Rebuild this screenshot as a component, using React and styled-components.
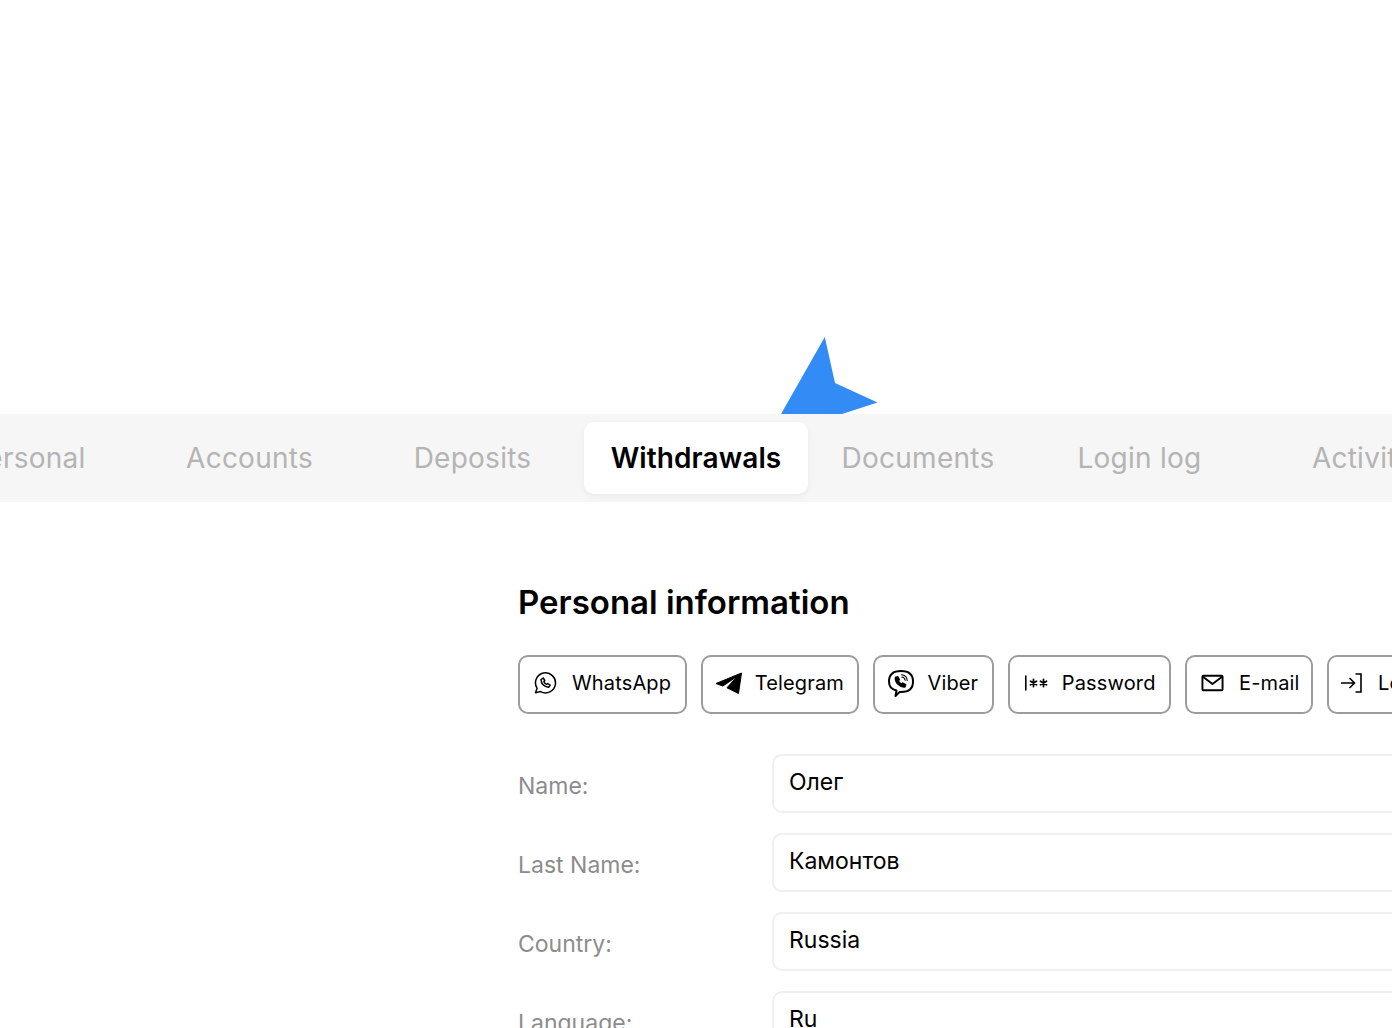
import React from "react";
import styled, { createGlobalStyle } from "styled-components";

const Global = createGlobalStyle`
  html, body { margin: 0; padding: 0; background: #fff; overflow: hidden; }
  body { font-family: Inter, "Liberation Sans", sans-serif; }
  * { box-sizing: border-box; }
`;
const Page = styled.div`
  width: 1392px; height: 1028px; overflow: hidden; position: relative; background: #fff;
`;
const Hero = styled.div`height: 414px; position: relative;`;
const Mark = styled.svg`position: absolute; left: 770px; top: 330px; display: block;`;
const TabBar = styled.nav`
  height: 88px; background: #f6f6f6; display: flex; align-items: center; margin-right: -200px; overflow: hidden;
`;
const TabRow = styled.div`display: flex; margin-left: -84px;`;
const Tab = styled.div`
  flex: none; width: ${p => p.$w}px; height: 72px; display: flex; align-items: center; justify-content: center;
  font-size: 28px; white-space: nowrap;
  letter-spacing: ${p => (p.$active ? "0.1px" : "0.25px")};
  font-weight: ${p => (p.$active ? 600 : 400)};
  color: ${p => (p.$active ? "#000" : "#b4b4b4")};
  background: ${p => (p.$active ? "#fff" : "transparent")};
  border-radius: ${p => (p.$active ? "10px" : "0")};
  box-shadow: ${p => (p.$active ? "0 2px 6px rgba(0,0,0,.05)" : "none")};
`;
const Section = styled.section`padding: 80px 0 0 518px; width: 1700px;`;
const Heading = styled.h2`
  margin: 0 0 33px; font-size: 33px; line-height: 40px; font-weight: 600; color: #000;
`;
const Actions = styled.div`display: flex; gap: 14px; margin-bottom: 40px;`;
const Action = styled.button`
  flex: none; height: 59px; padding: 0 ${p => p.$end ?? 13.5}px 3px 14px; display: flex; align-items: center; gap: 14px;
  background: #fff; border: 2px solid #9c9c9c; border-radius: 10px;
  font: 400 20px Inter, sans-serif; letter-spacing: 0.15px; color: #000; white-space: nowrap;
`;
const IconBox = styled.span`
  width: 24px; height: 28px; display: flex; align-items: center; justify-content: flex-start; flex: none;
  margin-left: ${p => p.$shift || 0}px;
  svg { display: block; flex: none; }
`;
const Row = styled.div`
  display: grid; grid-template-columns: 254px 1fr; height: 59px; margin-bottom: 20px; align-items: center;
`;
const Label = styled.label`font-size: 23px; color: #8c8c8c; padding-top: 4px;`;
const Field = styled.input`
  width: 100%; height: 59px; border: 2px solid #f0f0f0; border-radius: 10px; padding: 0 15px 3px; outline: none;
  font: 400 23px Inter, sans-serif; color: #000; background: #fff;
`;

const WhatsApp = () => (
  <svg width="24" height="24" viewBox="0 0 24 24" fill="none" stroke="#000" strokeWidth="1.5" strokeLinecap="round" strokeLinejoin="round" style={{ marginLeft: -1 }}>
    <path d="M2.500 21.700l1.600-4.400A10 10 0 1 1 7.600 20.600z" />
    <path d="M8 8.500c.2 4.500 3.200 7.300 7.600 7.700l1.500-2-2.500-1.700-1.200.9c-1.200-.6-2-1.500-2.600-2.700l1-1.200-1.600-2.500z" />
  </svg>
);
const Telegram = () => (
  <svg width="28" height="24" viewBox="0 0 28 24" style={{ marginLeft: -2 }}>
    <path fill="#000" stroke="#000" strokeWidth="1" strokeLinejoin="round" d="M26.500 2L1 12.500l6.800 2.600L22 5.500 12 16.800l11.500 5.700z" />
  </svg>
);
const Viber = () => (
  <svg width="26" height="28" viewBox="0 0 26 28" fill="none" stroke="#000" strokeLinecap="round" strokeLinejoin="round" style={{ marginLeft: -1 }}>
    <path strokeWidth="2" d="M8.500 21.500C3.500 20.500 1 17.500 1 12.500 1 5.500 5.500 2 13 2s12 3.500 12 10.500S21 23 13 23l-1.500.1-4 3.900z" />
    <path strokeWidth="1.600" fill="#000" d="M7.500 8.500l2.100-.8 1.700 3-1.200 1.200c.8 1.500 1.900 2.600 3.400 3.400l1.200-1.200 2.900 1.700-.8 2.100c-4.900.5-9.800-4.500-9.300-9.400z" />
    <path strokeWidth="1.100" d="M13.500 5.800c3.300.2 5.500 2.400 5.700 5.700M13.800 8c1.900.2 3.100 1.400 3.300 3.300" />
  </svg>
);
const PasswordIcon = () => (
  <svg width="24" height="16" viewBox="0 0 24 16" fill="none" stroke="#000" strokeLinecap="round">
    <path strokeWidth="1.600" d="M1.800 1v14" />
    <path strokeWidth="1.800" d="M9.500 4.500v7M6.500 6.200l6 3.600M12.500 6.200l-6 3.600M19.500 4.500v7M16.500 6.200l6 3.600M22.500 6.200l-6 3.600" />
  </svg>
);
const Mail = () => (
  <svg width="23" height="18" viewBox="0 0 24 18" fill="none" stroke="#000" strokeWidth="2" strokeLinejoin="round">
    <rect x="1.500" y="1.500" width="21" height="15" rx="1" />
    <path d="M2 2.500L12 10l10-7.500" />
  </svg>
);
const LoginIcon = () => (
  <svg width="22" height="20" viewBox="0 0 22 20" fill="none" stroke="#000" strokeWidth="1.600" strokeLinejoin="miter">
    <path d="M1 10h13M9.500 5l5 5-5 5" />
    <path d="M15.500 1h5.500v18h-5.500" />
  </svg>
);

const tabs = [
  ["Personal", 222], ["Accounts", 223], ["Deposits", 223], ["Withdrawals", 224, true],
  ["Documents", 220], ["Login log", 223], ["Activity", 223],
];
const actions = [
  ["WhatsApp", <WhatsApp />], ["Telegram", <Telegram />], ["Viber", <Viber />],
  ["Password", <PasswordIcon />], ["E-mail", <Mail />, 0, 11.5], ["Login", <LoginIcon />, -3],
];
const fields = [["Name:", "Олег"], ["Last Name:", "Камонтов"], ["Country:", "Russia"], ["Language:", "Ru"]];

export default function App() {
  return (
    <Page>
      <Global />
      <Hero>
        <Mark width="112" height="84" viewBox="0 0 112 84">
          <polygon fill="#338cf5" points="54.800,7 65,53 107.500,72.500 72,84 11,84" />
        </Mark>
      </Hero>
      <TabBar>
        <TabRow>
          {tabs.map(([t, w, a]) => <Tab key={t} $w={w} $active={a}>{t}</Tab>)}
        </TabRow>
      </TabBar>
      <Section>
        <Heading>Personal information</Heading>
        <Actions>
          {actions.map(([t, i, s, e]) => <Action key={t} $end={e}><IconBox $shift={s}>{i}</IconBox>{t}</Action>)}
        </Actions>
        {fields.map(([l, v]) => (
          <Row key={l}><Label>{l}</Label><Field readOnly value={v} /></Row>
        ))}
      </Section>
    </Page>
  );
}
